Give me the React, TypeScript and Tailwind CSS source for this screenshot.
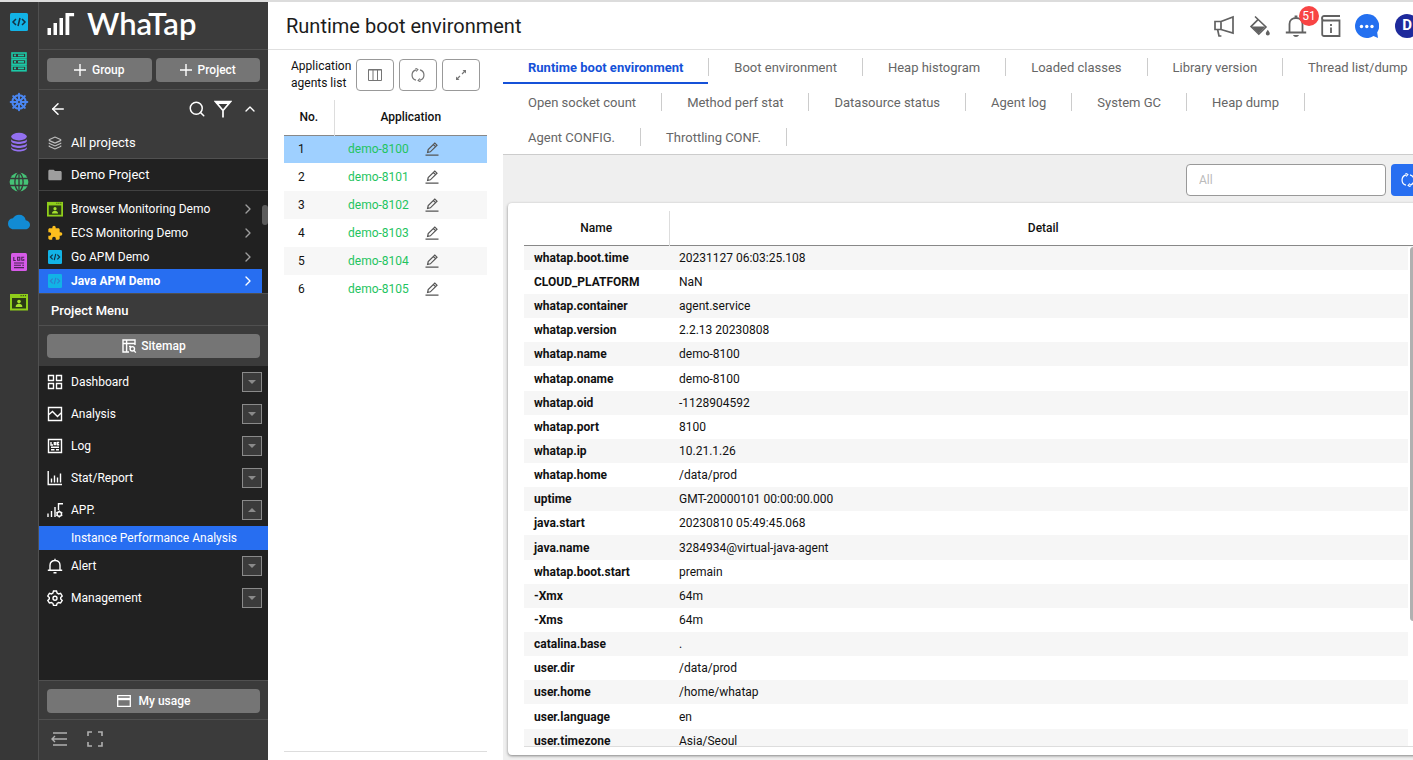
import { useState } from "react"
import type { ReactNode } from "react"
import clsx from "clsx"
import { ArrowLeft, ChevronRight, ChevronUp, Layers, Search, ShipWheel } from "lucide-react"
import { MdCloud, MdExtension, MdFolder } from "react-icons/md"

type IconProps = { className?: string }

function CodeIcon({ className, dark = "#123244" }: IconProps & { dark?: string }) {
  return (
    <svg viewBox="0 0 18 18" className={className} fill="none">
      <rect width="18" height="18" rx="1.5" fill="#12b3e6" />
      <path d="M6 6 3 9l3 3M12 6l3 3-3 3M10 5 8 13" stroke={dark} strokeWidth="1.5" />
    </svg>
  )
}

function ServerIcon() {
  return (
    <svg viewBox="0 0 16 20" className="h-5 w-4" fill="none" stroke="#1cc9a7" strokeWidth="1.6">
      {[1, 7.5, 14].map(y => (
        <g key={y}>
          <rect x="1" y={y} width="14" height="4.8" />
          <path d={`M3 ${y + 2.4}h2M7 ${y + 2.4}h6`} />
        </g>
      ))}
    </svg>
  )
}

function DatabaseIcon() {
  return (
    <svg viewBox="0 0 18 20" className="h-5 w-4.5" fill="#9370f0">
      <ellipse cx="9" cy="4.6" rx="7.8" ry="3.8" />
      <path d="M1.2 7c1.4 3.6 14.2 3.6 15.6 0v2.2c-1.4 3.6-14.2 3.6-15.6 0zM1.2 11c1.4 3.6 14.2 3.6 15.6 0v2.2c-1.4 3.6-14.2 3.6-15.6 0zM1.2 15c1.4 3.6 14.2 3.6 15.6 0v1.4c-1.4 4-14.2 4-15.6 0z" />
    </svg>
  )
}

function GlobeIcon() {
  return (
    <svg viewBox="0 0 20 20" className="size-5">
      <circle cx="10" cy="10" r="9.4" fill="#45c276" />
      <path
        d="M0 6.5h20M0 13.5h20M10 0v20M10 0C4.500 5 4.500 15 10 20M10 0c5.500 5 5.500 15 0 20"
        fill="none"
        stroke="#373737"
        strokeWidth="1.3"
      />
    </svg>
  )
}

function LogFileIcon() {
  return (
    <svg viewBox="0 0 16 18" className="h-4.5 w-4" fill="none" stroke="#4d2357" strokeWidth="1.1">
      <rect width="16" height="18" rx="1.5" fill="#d65ae8" stroke="none" />
      <path d="M2.8 4v3.5h2M6.6 4.2h2.2v3.1H6.6zM13.2 4.2h-2.4v3.1h2V6M3 10h10M3 12.3h7M11.2 12.3H13M3 14.6h10" />
    </svg>
  )
}

function BrowserIcon({ className }: IconProps) {
  return (
    <svg viewBox="0 0 18 18" className={className}>
      <path d="M0 1h18v16.5H0z" fill="#8fce1b" />
      <path d="M2 5h14v10.5H2z" fill="#2b3a16" />
      <path d="M10.5 2.6h1.2M12.7 2.6h1.2M14.9 2.6h1.2" stroke="#3c5312" strokeWidth="1.2" />
      <circle cx="9" cy="8.6" r="1.8" fill="#a6e22e" />
      <path d="M5.6 14c0-4.2 6.8-4.2 6.8 0z" fill="#a6e22e" />
    </svg>
  )
}

function FilterIcon() {
  return (
    <svg viewBox="0 0 18 18" className="size-4.5" fill="none" stroke="#fff" strokeWidth="1.7">
      <path d="M1.5 1.600h15L9 10.500zM9 10v7.500" />
      <path d="M2.500 3h13" strokeWidth="2" />
    </svg>
  )
}

function SitemapIcon() {
  return (
    <svg viewBox="0 0 16 16" className="size-4" fill="none" stroke="#fff" strokeWidth="1.4">
      <path d="M8 14H2V2h12v5M2 5.5h12M5.6 2v12M8 8.5h2" />
      <circle cx="11.3" cy="10.8" r="2.2" />
      <path d="m12.8 12.4 2 2.2" />
    </svg>
  )
}

function LogoIcon() {
  return (
    <svg viewBox="0 0 27 22" className="h-5.5 w-7" fill="#fff">
      <path d="M0 15h3.500v7H0zM6 10h3.500v12H6zM12 5h3.500v17H12zM18 0h8.600v3.200h-4.800V22H18z" />
    </svg>
  )
}

function Megaphone() {
  return (
    <svg viewBox="0 0 22 22" className="size-5.5" fill="none" stroke="#616161" strokeWidth="1.7">
      <path d="M2 6.5h6v8H2zM8 6.5 20 2v16L8 14.5M4.6 14.5 6 21h2.4" />
    </svg>
  )
}

function PaintBucket() {
  return (
    <svg viewBox="0 0 22 22" className="size-5.5" fill="#616161">
      <path d="M6 1.5 17 12l-7.2 7.2L2 11.6l7-7" fill="none" stroke="#616161" strokeWidth="1.6" />
      <path d="M2.5 11.5h14l-6.7 7zM18.8 14.8c1.2 1.7 2 2.700 2 3.8a2 2 0 0 1-4 0c0-1.100.8-2.100 2-3.800z" />
    </svg>
  )
}

function AlertBell() {
  return (
    <svg viewBox="0 0 22 24" className="h-6 w-5.5" fill="none" stroke="#616161" strokeWidth="1.8">
      <path d="M.8 18.500h20.400M4.500 18.500V10c0-8 13-8 13 0v8.500" />
      <path d="M8 21h6c-.8 2.600-5.200 2.600-6 0zM9.600 1.500h2.800v2H9.600z" fill="#616161" stroke="none" />
    </svg>
  )
}

function InfoBook() {
  return (
    <svg viewBox="0 0 20 22" className="h-5.5 w-5" fill="none" stroke="#616161" strokeWidth="1.8">
      <path d="M19 1H3.200a2 2 0 0 0 0 4.500H18.500V21H3A1.800 1.800 0 0 1 1.200 19V3" />
      <path d="M10 9v2M10 12.500V18" />
    </svg>
  )
}

function ChatBubble() {
  return (
    <svg viewBox="0 0 24 24" className="size-6">
      <path d="M12 0a12 12 0 1 0 6.500 22.100L23 24l-.8-5.500A12 12 0 0 0 12 0z" fill="#2470f0" />
      <g fill="#fff">
        <circle cx="6.500" cy="12.500" r="1.700" />
        <circle cx="11.800" cy="12.500" r="1.700" />
        <circle cx="17" cy="12.500" r="1.700" />
      </g>
    </svg>
  )
}

function RefreshIcon({ className }: IconProps) {
  return (
    <svg viewBox="0 0 14 14" className={className} fill="none" stroke="currentColor" strokeWidth="1.2">
      <path d="M5 12.200A5.400 5.400 0 0 1 5 1.800M9 1.800a5.400 5.400 0 0 1 0 10.400M4.500 .3 6.800 1.500 5.200 3.500M9.500 13.700 7.200 12.500 8.800 10.500" />
    </svg>
  )
}

function EditIcon() {
  return (
    <svg viewBox="0 0 14 14" className="size-3.5" fill="none" stroke="#555" strokeWidth="1.2">
      <path d="M2.600 10.400 3.200 7.600 9.800 1l2.200 2.200-6.600 6.600zM8.300 2.500l2.200 2.200M.5 13.200h13" />
    </svg>
  )
}

const menuIcons: Record<string, ReactNode> = {
  Dashboard: <path d="M1.500 1.500h5v5h-5zM9.500 1.500h5v5h-5zM1.500 9.500h5v5h-5zM9.500 9.500h5v5h-5z" />,
  Analysis: <path d="M1.500 1.500h13v13h-13zM2 8.500l3.500-3 5 5L14 7" />,
  Log: <path d="M1.500 1.500h13v13h-13zM4 4v3h2M7.300 4.600h1.500v2H7.300zM12.200 4.500H10.600v2.200H12.200M4 9.200h8M4 11.800h3.500M9 11.800h3" />,
  "Stat/Report": <path d="M1.200 1v13.500H15M4.500 12.500V8.500M7.500 12.500V5.500M10.500 12.500V7.500M13.500 12.500V3.500" />,
  "APP.": (
    <>
      <path d="M1 15v-3.500M4.500 15V9M8 15V5M11.500 8V1.700H16" />
      <circle cx="12.300" cy="12" r="2.200" />
      <path d="M12.300 8.500v1.300M12.300 14.200v1.300M9.300 10.300l1 .6M14.300 13l1 .6M9.300 13.700l1-.6M14.300 11l1-.6" />
    </>
  ),
  Alert: <path d="M.8 12.200h14.400M3 12V7.300c0-6.500 10-6.500 10 0V12M8 2.500V.8M6.500 14.700h3" />,
  Management: (
    <>
      <path d="M6.500 1h3l.6 2 1.500.9 2-.5 1.600 2.600-1.500 1.500v1.400l1.500 1.500-1.600 2.600-2-.5-1.500.9-.6 2h-3l-.6-2-1.500-.9-2 .5-1.600-2.600 1.500-1.500V7.500L.8 6l1.600-2.600 2 .5L5.900 3z" />
      <circle cx="8" cy="8.200" r="2" />
    </>
  ),
}

const projects = [
  { name: "Browser Monitoring Demo", icon: <BrowserIcon className="size-4" /> },
  { name: "ECS Monitoring Demo", icon: <MdExtension className="size-4.5 text-[#fcbf1e]" /> },
  { name: "Go APM Demo", icon: <CodeIcon className="size-3.5" /> },
  { name: "Java APM Demo", icon: <CodeIcon className="size-3.5" dark="#2f7fd0" /> },
]

const menu = ["Dashboard", "Analysis", "Log", "Stat/Report", "APP.", "Alert", "Management"]

const agents = ["demo-8100", "demo-8101", "demo-8102", "demo-8103", "demo-8104", "demo-8105"]

const tabs = [
  "Runtime boot environment",
  "Boot environment",
  "Heap histogram",
  "Loaded classes",
  "Library version",
  "Thread list/dump",
  "Open socket count",
  "Method perf stat",
  "Datasource status",
  "Agent log",
  "System GC",
  "Heap dump",
  "Agent CONFIG.",
  "Throttling CONF.",
]

const env = [
  ["whatap.boot.time", "20231127 06:03:25.108"],
  ["CLOUD_PLATFORM", "NaN"],
  ["whatap.container", "agent.service"],
  ["whatap.version", "2.2.13 20230808"],
  ["whatap.name", "demo-8100"],
  ["whatap.oname", "demo-8100"],
  ["whatap.oid", "-1128904592"],
  ["whatap.port", "8100"],
  ["whatap.ip", "10.21.1.26"],
  ["whatap.home", "/data/prod"],
  ["uptime", "GMT-20000101 00:00:00.000"],
  ["java.start", "20230810 05:49:45.068"],
  ["java.name", "3284934@virtual-java-agent"],
  ["whatap.boot.start", "premain"],
  ["-Xmx", "64m"],
  ["-Xms", "64m"],
  ["catalina.base", "."],
  ["user.dir", "/data/prod"],
  ["user.home", "/home/whatap"],
  ["user.language", "en"],
  ["user.timezone", "Asia/Seoul"],
]

function Rail() {
  const items = [
    { label: "Application", icon: <CodeIcon className="size-4.5" /> },
    { label: "Server", icon: <ServerIcon /> },
    { label: "Kubernetes", icon: <ShipWheel className="size-5 text-[#4a86f0]" strokeWidth={2.4} /> },
    { label: "Database", icon: <DatabaseIcon /> },
    { label: "Network", icon: <GlobeIcon /> },
    { label: "Cloud", icon: <MdCloud className="size-5.5 text-[#128bd4]" /> },
    { label: "Log", icon: <LogFileIcon /> },
    { label: "Browser", icon: <BrowserIcon className="size-4.5" /> },
  ]
  return (
    <nav className="flex w-[39px] shrink-0 flex-col border-r border-[#505050] bg-[#373737]">
      {items.map(item => (
        <button key={item.label} aria-label={item.label} className="flex h-10 items-center justify-center">
          {item.icon}
        </button>
      ))}
    </nav>
  )
}

const grayButton =
  "flex h-6 flex-1 items-center justify-center rounded-sm bg-[#757575] text-xs font-medium text-white"

function Sidebar() {
  const [project, setProject] = useState("Java APM Demo")
  const [open, setOpen] = useState("APP.")

  return (
    <aside className="flex w-[229px] shrink-0 flex-col bg-[#3b3b3b] text-xs text-white">
      <div className="flex h-12 items-center gap-3 border-b border-[#505050] pb-1 pl-2">
        <LogoIcon />
        <span className="font-['Lato',sans-serif] text-[31px] leading-none font-semibold">WhaTap</span>
      </div>
      <div className="flex h-10 items-center gap-1 border-b border-[#505050] px-2 pt-px">
        {["Group", "Project"].map(label => (
          <button key={label} className={clsx(grayButton, "gap-1.5")}>
            <svg viewBox="0 0 12 12" className="size-3" stroke="#fff" strokeWidth="1.4">
              <path d="M6 0v12M0 6h12" />
            </svg>
            {label}
          </button>
        ))}
      </div>
      <div className="flex h-[37px] items-center gap-2 px-2.5">
        <button aria-label="Back" className="mr-auto">
          <ArrowLeft className="size-4.5" />
        </button>
        <button aria-label="Search">
          <Search className="size-4.5" />
        </button>
        <button aria-label="Filter">
          <FilterIcon />
        </button>
        <button aria-label="Collapse" className="pl-0.5">
          <ChevronUp className="size-4" />
        </button>
      </div>
      <a href="#all" className="flex h-8 items-center gap-2 border-b border-[#505050] px-2 text-[13px]">
        <span className="flex w-4 justify-center">
          <Layers className="size-3.5 text-[#bdbdbd]" />
        </span>
        All projects
      </a>
      <div className="flex h-8 items-center gap-2 border-b border-[#424242] bg-[#212121] px-2 text-[13px]">
        <MdFolder className="size-4 text-[#9e9e9e]" />
        Demo Project
      </div>
      <div className="relative bg-[#212121] pt-1.5">
        {projects.map(p => (
          <button
            key={p.name}
            onClick={() => setProject(p.name)}
            className={clsx(
              "flex h-6 w-[223px] items-center gap-2 pr-1.5 pl-2",
              project === p.name && "bg-[#276ef1] font-bold"
            )}
          >
            <span className="flex w-4 justify-center">{p.icon}</span>
            {p.name}
            <ChevronRight className={clsx("ml-auto size-4", project !== p.name && "text-[#9e9e9e]")} />
          </button>
        ))}
        <div className="absolute top-3.5 right-0 h-5 w-1.5 rounded-full bg-[#5c5c5c]" />
      </div>
      <h2 className="flex h-[33px] items-center border-y border-[#505050] px-3 pt-0.5 text-[13px] font-medium">
        Project Menu
      </h2>
      <div className="flex h-10 items-center px-2">
        <button className={clsx(grayButton, "gap-1")}>
          <SitemapIcon />
          Sitemap
        </button>
      </div>
      <div className="flex-1 bg-[#212121]">
        {menu.map(label => (
          <div key={label}>
            <div className="flex h-8 items-center gap-2 pr-1.5 pl-2">
              <svg viewBox="0 0 16 16" className="size-4" fill="none" stroke="#fff" strokeWidth="1.4">
                {menuIcons[label]}
              </svg>
              <span className="flex-1">{label}</span>
              <button
                aria-label={`Toggle ${label}`}
                onClick={() => setOpen(open === label ? "" : label)}
                className="flex size-5 items-center justify-center border border-[#8a8a8a] bg-[#3b3b3b]"
              >
                <svg viewBox="0 0 8 4" className={clsx("h-1 w-2", open === label && "rotate-180")} fill="#8a8a8a">
                  <path d="M0 0h8L4 4z" />
                </svg>
              </button>
            </div>
            {label === "APP." && open === label && (
              <a href="#instance" className="flex h-6 items-center bg-[#276ef1] pl-8">
                Instance Performance Analysis
              </a>
            )}
          </div>
        ))}
      </div>
      <div className="flex h-10 items-center border-y border-[#505050] px-2 pt-px">
        <button className={clsx(grayButton, "gap-2")}>
          <svg viewBox="0 0 14 12" className="h-3 w-3.5" fill="none" stroke="#fff" strokeWidth="1.3">
            <path d="M.7.7h12.600v10.600H.7z" />
            <path d="M.7 4h12.600" strokeWidth="2.400" />
          </svg>
          My usage
        </button>
      </div>
      <div className="flex h-10 items-center gap-5 px-3 pb-0.5">
        <button aria-label="Fold menu">
          <svg viewBox="0 0 16 16" className="size-4" fill="none" stroke="#b0b0b0" strokeWidth="1.400">
            <path d="M2 2h14M1 8h15M2 14h14M4 5 1 8l3 3" />
          </svg>
        </button>
        <button aria-label="Full screen">
          <svg viewBox="0 0 16 16" className="size-4" fill="none" stroke="#b0b0b0" strokeWidth="1.600">
            <path d="M1 5V1h4M11 1h4v4M15 11v4h-4M5 15H1v-4" />
          </svg>
        </button>
      </div>
    </aside>
  )
}

function Header() {
  return (
    <header className="flex h-12 shrink-0 items-center border-b border-[#e0e0e0] px-4.5">
      <h1 className="flex-1 text-xl text-[#1c1c1c]">Runtime boot environment</h1>
      <div className="flex items-center gap-3.5">
        <button aria-label="Notices">
          <Megaphone />
        </button>
        <button aria-label="Theme">
          <PaintBucket />
        </button>
        <button aria-label="Alerts" className="relative">
          <AlertBell />
          <span className="absolute -top-2 left-3.5 flex size-5 items-center justify-center rounded-full bg-[#f84444] text-xs text-white">
            51
          </span>
        </button>
        <button aria-label="Guide">
          <InfoBook />
        </button>
        <button aria-label="Chat">
          <ChatBubble />
        </button>
        <button className="ml-0.5 size-6 rounded-full bg-[#1e2a9c] text-[15px] leading-none font-bold text-white">D</button>
      </div>
    </header>
  )
}

function AgentList() {
  const [selected, setSelected] = useState("demo-8100")
  const toolButton = "flex h-8 w-[38px] items-center justify-center rounded-sm border border-[#999] text-[#757575]"

  return (
    <section className="mx-4 mb-2 flex w-[203px] shrink-0 flex-col border-b border-[#ddd] text-xs">
      <div className="flex h-[50px] items-center gap-[5px] pl-[7px]">
        <h2 className="w-[60px] leading-[17px] whitespace-nowrap">
          Application
          <br />
          agents list
        </h2>
        <button aria-label="Columns" className={toolButton}>
          <svg viewBox="0 0 14 12" className="h-3 w-3.5" fill="none" stroke="currentColor">
            <path d="M.5.5h13v11H.5zM5 .5v11M9.500.5v11M.5 1h13" />
          </svg>
        </button>
        <button aria-label="Refresh" className={toolButton}>
          <RefreshIcon className="size-3.5" />
        </button>
        <button aria-label="Expand" className={toolButton}>
          <svg viewBox="0 0 12 12" className="size-3" fill="currentColor" stroke="currentColor" strokeWidth="1.200">
            <path d="M7 5l3.500-3.500M5 7l-3.500 3.500" />
            <path d="M7.500 1H11v3.500zM4.500 11H1V7.500z" stroke="none" />
          </svg>
        </button>
      </div>
      <table className="w-full table-fixed">
        <thead>
          <tr className="h-[35px] border-b border-[#888]">
            <th className="w-[50px] border-r border-[#ddd] font-medium">No.</th>
            <th className="font-medium">Application</th>
          </tr>
        </thead>
        <tbody>
          {agents.map((name, i) => (
            <tr
              key={name}
              onClick={() => setSelected(name)}
              className={clsx("h-7", selected === name ? "bg-[#9fd0ff]" : i % 2 === 0 && "bg-[#f7f7f7]")}
            >
              <td className="pl-3.5">{i + 1}</td>
              <td className="pl-3.5">
                <div className="flex items-center gap-4">
                  <a href={`#${name}`} className="text-[#1fc45f]">
                    {name}
                  </a>
                  <button aria-label={`Edit ${name}`}>
                    <EditIcon />
                  </button>
                </div>
              </td>
            </tr>
          ))}
        </tbody>
      </table>
    </section>
  )
}

function Detail() {
  const [tab, setTab] = useState(tabs[0])
  const [filter, setFilter] = useState("")
  const rows = env.filter(([name]) => name.toLowerCase().includes(filter.toLowerCase()))

  return (
    <section className="flex min-w-0 flex-1 flex-col text-xs">
      <div className="flex flex-wrap gap-y-px border-b border-[#ccc] text-[13px]">
        {tabs.map(t => (
          <div key={t} className="flex items-center">
            <button
              onClick={() => setTab(t)}
              className={clsx(
                "h-[34px] border-b-2 px-[25px] pt-1",
                tab === t ? "border-[#1551d8] font-bold text-[#1551d8]" : "border-transparent text-[#666]"
              )}
            >
              {t}
            </button>
            <span className="h-[18px] w-px bg-[#ccc]" />
          </div>
        ))}
      </div>
      <div className="flex min-h-0 flex-1 flex-col bg-[#efefef] pr-1 pb-[5px] pl-[5px]">
        <div className="flex h-12 shrink-0 items-center justify-end gap-[5px] pt-0.5 pr-2">
          <input
            type="text"
            aria-label="Filter"
            placeholder="All"
            value={filter}
            onChange={e => setFilter(e.target.value)}
            className="h-8 w-[200px] rounded-sm border border-[#999] bg-white px-3 placeholder:text-[#bbb]"
          />
          <button aria-label="Reload" className="flex h-8 w-[34px] items-center justify-center rounded-sm bg-[#276ef1] text-white">
            <RefreshIcon className="size-3.5" />
          </button>
        </div>
        <div className="flex min-h-0 flex-1 flex-col rounded-sm bg-white px-4 pt-2 pb-2 shadow-[0_1px_3px_rgba(0,0,0,0.45)]">
          <div className="relative min-h-0 flex-1 overflow-hidden border-b border-[#ddd]">
            <table className="h-[542px] w-full table-fixed">
              <thead>
                <tr className="h-[34px] border-b border-[#888]">
                  <th className="w-[145px] border-r border-[#ddd] font-medium">Name</th>
                  <th className="font-medium">Detail</th>
                </tr>
              </thead>
              <tbody>
                {rows.map(([name, value]) => (
                  <tr key={name} className="odd:bg-[#f6f6f6]">
                    <th className="pl-2.5 text-left font-bold">{name}</th>
                    <td className="pl-2.5">{value}</td>
                  </tr>
                ))}
              </tbody>
            </table>
            <div className="absolute top-9 right-0 bottom-0 w-[9px] bg-white pl-0.5">
              <div className="h-3/4 rounded-full bg-[#b0b0b0]" />
            </div>
          </div>
        </div>
      </div>
    </section>
  )
}

export default function App() {
  return (
    <div className="flex h-screen overflow-hidden border-t-2 border-[#dcdcdc] bg-white font-['Roboto',sans-serif] text-[#111]">
      <Rail />
      <Sidebar />
      <main className="min-w-0 flex-1">
        <div className="flex h-full w-[calc(100%+24px)] flex-col">
          <Header />
          <div className="flex min-h-0 flex-1">
            <AgentList />
            <Detail />
          </div>
        </div>
      </main>
    </div>
  )
}
